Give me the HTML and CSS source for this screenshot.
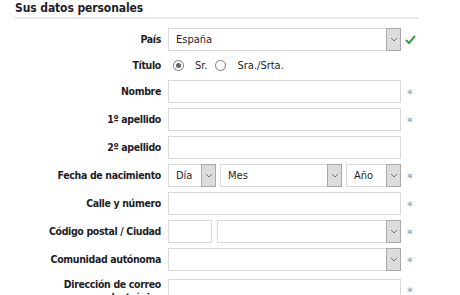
FILE: index.html
```html
<!DOCTYPE html>
<html lang="es">
<head>
    <meta charset="UTF-8">
    <meta name="viewport" content="width=device-width, initial-scale=1.0">
    <title>Sus datos personales</title>
    <link rel="stylesheet" href="styles.css">
</head>
<body>

<div class="panel">
    <h2 class="panel-title">Sus datos personales</h2>

    <div class="form-grid">
        <!-- País -->
        <label class="field-label">País</label>
        <div class="select">
            <span class="select-value">España</span>
            <span class="select-btn"><svg viewBox="0 0 8 5" width="8" height="5"><polyline points="1 1 4 4 7 1" fill="none" stroke="#777" stroke-width="1"/></svg></span>
        </div>
        <span class="mark mark-ok"><svg viewBox="0 0 11 9" width="11" height="9"><polyline points="1 5 4 8 10 1" fill="none" stroke="#3d9a3d" stroke-width="2"/></svg></span>

        <!-- Título -->
        <label class="field-label">Título</label>
        <div class="radio-group">
            <span class="radio checked"></span><span class="radio-text">Sr.</span>
            <span class="radio"></span><span class="radio-text">Sra./Srta.</span>
        </div>
        <span class="mark"></span>

        <label class="field-label">Nombre</label>
        <div class="input"></div>
        <span class="mark req">*</span>

        <label class="field-label">1º apellido</label>
        <div class="input"></div>
        <span class="mark req">*</span>

        <label class="field-label">2º apellido</label>
        <div class="input"></div>
        <span class="mark"></span>

        <!-- Fecha -->
        <label class="field-label">Fecha de nacimiento</label>
        <div class="field-row">
            <div class="select select-day">
                <span class="select-value">Día</span>
                <span class="select-btn"><svg viewBox="0 0 8 5" width="8" height="5"><polyline points="1 1 4 4 7 1" fill="none" stroke="#777" stroke-width="1"/></svg></span>
            </div>
            <div class="select select-month">
                <span class="select-value">Mes</span>
                <span class="select-btn"><svg viewBox="0 0 8 5" width="8" height="5"><polyline points="1 1 4 4 7 1" fill="none" stroke="#777" stroke-width="1"/></svg></span>
            </div>
            <div class="select select-year">
                <span class="select-value">Año</span>
                <span class="select-btn"><svg viewBox="0 0 8 5" width="8" height="5"><polyline points="1 1 4 4 7 1" fill="none" stroke="#777" stroke-width="1"/></svg></span>
            </div>
        </div>
        <span class="mark req">*</span>

        <label class="field-label">Calle y número</label>
        <div class="input"></div>
        <span class="mark req">*</span>

        <!-- CP / Ciudad -->
        <label class="field-label">Código postal / Ciudad</label>
        <div class="field-row field-row-cp">
            <div class="input input-cp"></div>
            <div class="select select-city">
                <span class="select-value"></span>
                <span class="select-btn"><svg viewBox="0 0 8 5" width="8" height="5"><polyline points="1 1 4 4 7 1" fill="none" stroke="#777" stroke-width="1"/></svg></span>
            </div>
        </div>
        <span class="mark req">*</span>

        <label class="field-label">Comunidad autónoma</label>
        <div class="select">
            <span class="select-value"></span>
            <span class="select-btn"><svg viewBox="0 0 8 5" width="8" height="5"><polyline points="1 1 4 4 7 1" fill="none" stroke="#777" stroke-width="1"/></svg></span>
        </div>
        <span class="mark req">*</span>

        <label class="field-label field-label-top">Dirección de correo electrónico</label>
        <div class="input"></div>
        <span class="mark req">*</span>
    </div>
</div>

</body>
</html>
```

FILE: styles.css
```css
body, html {
    margin: 0;
    padding: 0;
    background-color: #fff;
    color: #1e1e28;
    font-family: "DejaVu Sans Condensed", "DejaVu Sans", sans-serif;
    font-size: 11px;
}
.panel {
    padding: 0 15px;
}
.panel-title {
    margin: 0 0 9px 0;
    width: 403px;
    font-size: 12px;
    line-height: 16px;
    padding-bottom: 1px;
    border-bottom: 2px solid #e6e6e6;
    color: #1e1e28;
    letter-spacing: -0.1px;
}
.form-grid {
    display: grid;
    grid-template-columns: 146px 233px 16px;
    column-gap: 7px;
    row-gap: 5px;
    align-items: center;
}
.field-label {
    font-weight: bold;
    font-size: 10.5px;
    letter-spacing: -0.35px;
    text-align: right;
    line-height: 13px;
}
.field-label-top {
    align-self: start;
    padding-top: 2px;
}
.input, .select {
    box-sizing: border-box;
    height: 23px;
    border: 1px solid #d9d9d9;
    background: #fff;
}
.select {
    display: flex;
    align-items: stretch;
}
.select-value {
    flex: 1;
    padding-left: 7px;
    line-height: 21px;
    white-space: nowrap;
    overflow: hidden;
}
.select-btn {
    width: 13px;
    margin: -1px -1px -1px 0;
    border: 1px solid #a9a9a9;
    background: #dcdcdc;
    display: flex;
    align-items: center;
    justify-content: center;
}
.field-row {
    display: flex;
    gap: 4px;
}
.select-day { width: 48px; }
.select-month { width: 122px; }
.select-year { width: 55px; }
.field-row-cp {
    gap: 5px;
}
.input-cp { width: 44px; }
.select-city { flex: 1; }
.radio-group {
    display: flex;
    align-items: center;
    height: 19px;
    padding-left: 5px;
}
.radio {
    box-sizing: border-box;
    width: 11px;
    height: 11px;
    border: 1px solid #7a7a7a;
    border-radius: 50%;
    display: flex;
    align-items: center;
    justify-content: center;
}
.radio.checked::after {
    content: "";
    width: 5px;
    height: 5px;
    border-radius: 50%;
    background: #666;
}
.radio-text {
    margin: 0 8px 0 11px;
}
.mark {
    display: flex;
    align-items: center;
    height: 100%;
}
.mark-ok {
    margin-left: -3px;
}
.req {
    color: #9a9a9a;
    font-size: 13px;
    padding-top: 3px;
    margin-left: -1px;
}
```
